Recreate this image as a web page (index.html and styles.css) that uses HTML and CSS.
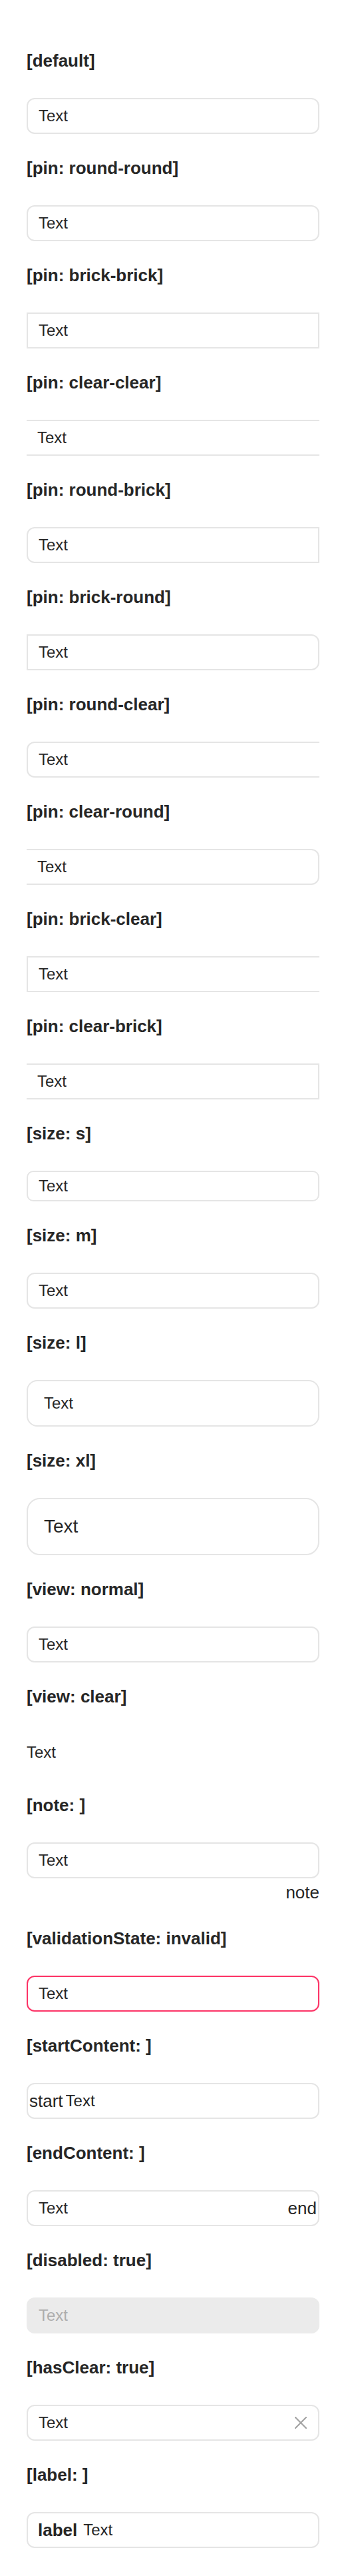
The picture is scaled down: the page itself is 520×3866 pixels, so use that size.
FILE: index.html
```html
<!DOCTYPE html>
<html lang="en">
<head>
<meta charset="utf-8">
<title>TextInput showcase</title>
<link rel="stylesheet" href="styles.css">
</head>
<body>
<main class="page">
  <section class="case">
    <h4 class="case-title">[default]</h4>
    <div class="ti ti-m"><input class="ti-control" type="text" value="Text"></div>
  </section>
  <section class="case">
    <h4 class="case-title">[pin: round-round]</h4>
    <div class="ti ti-m"><input class="ti-control" type="text" value="Text"></div>
  </section>
  <section class="case">
    <h4 class="case-title">[pin: brick-brick]</h4>
    <div class="ti ti-m l-brick r-brick"><input class="ti-control" type="text" value="Text"></div>
  </section>
  <section class="case">
    <h4 class="case-title">[pin: clear-clear]</h4>
    <div class="ti ti-m l-clear r-clear"><input class="ti-control" type="text" value="Text"></div>
  </section>
  <section class="case">
    <h4 class="case-title">[pin: round-brick]</h4>
    <div class="ti ti-m r-brick"><input class="ti-control" type="text" value="Text"></div>
  </section>
  <section class="case">
    <h4 class="case-title">[pin: brick-round]</h4>
    <div class="ti ti-m l-brick"><input class="ti-control" type="text" value="Text"></div>
  </section>
  <section class="case">
    <h4 class="case-title">[pin: round-clear]</h4>
    <div class="ti ti-m r-clear"><input class="ti-control" type="text" value="Text"></div>
  </section>
  <section class="case">
    <h4 class="case-title">[pin: clear-round]</h4>
    <div class="ti ti-m l-clear"><input class="ti-control" type="text" value="Text"></div>
  </section>
  <section class="case">
    <h4 class="case-title">[pin: brick-clear]</h4>
    <div class="ti ti-m l-brick r-clear"><input class="ti-control" type="text" value="Text"></div>
  </section>
  <section class="case">
    <h4 class="case-title">[pin: clear-brick]</h4>
    <div class="ti ti-m l-clear r-brick"><input class="ti-control" type="text" value="Text"></div>
  </section>
  <section class="case">
    <h4 class="case-title">[size: s]</h4>
    <div class="ti ti-s"><input class="ti-control" type="text" value="Text"></div>
  </section>
  <section class="case">
    <h4 class="case-title">[size: m]</h4>
    <div class="ti ti-m"><input class="ti-control" type="text" value="Text"></div>
  </section>
  <section class="case">
    <h4 class="case-title">[size: l]</h4>
    <div class="ti ti-l"><input class="ti-control" type="text" value="Text"></div>
  </section>
  <section class="case">
    <h4 class="case-title">[size: xl]</h4>
    <div class="ti ti-xl"><input class="ti-control" type="text" value="Text"></div>
  </section>
  <section class="case">
    <h4 class="case-title">[view: normal]</h4>
    <div class="ti ti-m"><input class="ti-control" type="text" value="Text"></div>
  </section>
  <section class="case">
    <h4 class="case-title">[view: clear]</h4>
    <div class="ti ti-m ti-view-clear"><input class="ti-control" type="text" value="Text"></div>
  </section>
  <section class="case">
    <h4 class="case-title">[note: ]</h4>
    <div class="ti ti-m"><input class="ti-control" type="text" value="Text"></div>
    <div class="ti-note">note</div>
  </section>
  <section class="case">
    <h4 class="case-title">[validationState: invalid]</h4>
    <div class="ti ti-m ti-invalid"><input class="ti-control" type="text" value="Text"></div>
  </section>
  <section class="case">
    <h4 class="case-title">[startContent: ]</h4>
    <div class="ti ti-m has-start"><span class="slot-start">start</span><input class="ti-control" type="text" value="Text"></div>
  </section>
  <section class="case">
    <h4 class="case-title">[endContent: ]</h4>
    <div class="ti ti-m"><input class="ti-control" type="text" value="Text"><span class="slot-end">end</span></div>
  </section>
  <section class="case">
    <h4 class="case-title">[disabled: true]</h4>
    <div class="ti ti-m ti-disabled"><input class="ti-control" type="text" value="Text" disabled></div>
  </section>
  <section class="case">
    <h4 class="case-title">[hasClear: true]</h4>
    <div class="ti ti-m"><input class="ti-control" type="text" value="Text"><button class="ti-clear" type="button" aria-label="Clear"><svg viewBox="0 0 18 18" width="18" height="18" aria-hidden="true"><path d="M1 1 L17 17 M17 1 L1 17" stroke="currentColor" stroke-width="2.2" fill="none" stroke-linecap="round"/></svg></button></div>
  </section>
  <section class="case">
    <h4 class="case-title">[label: ]</h4>
    <div class="ti ti-m has-label"><label class="ti-label" for="lbl">label</label><input id="lbl" class="ti-control" type="text" value="Text"></div>
  </section>
</main>
</body>
</html>
```

FILE: styles.css
```css
* {
  box-sizing: border-box;
}

html, body {
  margin: 0;
  padding: 0;
  background: #ffffff;
}

body {
  font-family: "Liberation Sans", Arial, sans-serif;
  color: #262626;
}

.page {
  display: flex;
  flex-direction: column;
  gap: 36px;
  padding: 76px 40px 42px;
  width: 520px;
}

.case {
  display: flex;
  flex-direction: column;
}

.case-title {
  margin: 0 0 41px;
  font-size: 26px;
  line-height: 30px;
  font-weight: 700;
  color: #262626;
}

/* text input */
.ti {
  display: flex;
  align-items: center;
  width: 100%;
  height: 54px;
  border: 2px solid #e5e5e5;
  border-radius: 12px;
  background: #fff;
  font-size: 24px;
}

.ti-control {
  flex: 1 1 auto;
  min-width: 0;
  height: 100%;
  margin: 0;
  padding: 0 16px;
  border: 0;
  outline: none;
  background: transparent;
  font-family: "Liberation Sans", Arial, sans-serif;
  font-size: inherit;
  color: #262626;
}

.ti-s {
  height: 46px;
  border-radius: 10px;
}

.ti-l {
  height: 70px;
  border-radius: 16px;
}
.ti-l .ti-control {
  padding: 0 24px;
}

.ti-xl {
  height: 86px;
  border-radius: 20px;
  font-size: 28px;
}
.ti-xl .ti-control {
  padding: 0 24px;
}

/* pins */
.l-brick {
  border-top-left-radius: 0;
  border-bottom-left-radius: 0;
}
.r-brick {
  border-top-right-radius: 0;
  border-bottom-right-radius: 0;
}
.l-clear {
  border-left-width: 0;
  border-top-left-radius: 0;
  border-bottom-left-radius: 0;
}
.r-clear {
  border-right-width: 0;
  border-top-right-radius: 0;
  border-bottom-right-radius: 0;
}

/* views & states */
.ti-view-clear {
  height: 56px;
  border: 0;
  border-radius: 0;
  background: transparent;
}
.ti-view-clear .ti-control {
  padding: 0;
}

.ti-invalid {
  border-color: #fc3366;
}

.ti-disabled {
  border-color: transparent;
  background: #ebebeb;
}
.ti-disabled .ti-control {
  color: #adadad;
}

.ti-note {
  padding-top: 4px;
  font-size: 26px;
  line-height: 35px;
  text-align: right;
  color: #262626;
}

.slot-start {
  margin-left: 2px;
  font-size: 26px;
  color: #262626;
  flex: none;
}
.has-start .ti-control {
  padding-left: 4px;
}

.slot-end {
  margin-right: 2px;
  font-size: 26px;
  color: #262626;
  flex: none;
}

.ti-clear {
  flex: none;
  display: flex;
  align-items: center;
  justify-content: center;
  width: 36px;
  height: 36px;
  margin-right: 8px;
  padding: 0;
  border: 0;
  background: transparent;
  color: #a3a3a3;
}

.ti-label {
  flex: none;
  padding-left: 15px;
  margin-right: 9px;
  font-size: 26px;
  font-weight: 700;
  color: #262626;
}
.has-label .ti-control {
  padding-left: 0;
}
```
